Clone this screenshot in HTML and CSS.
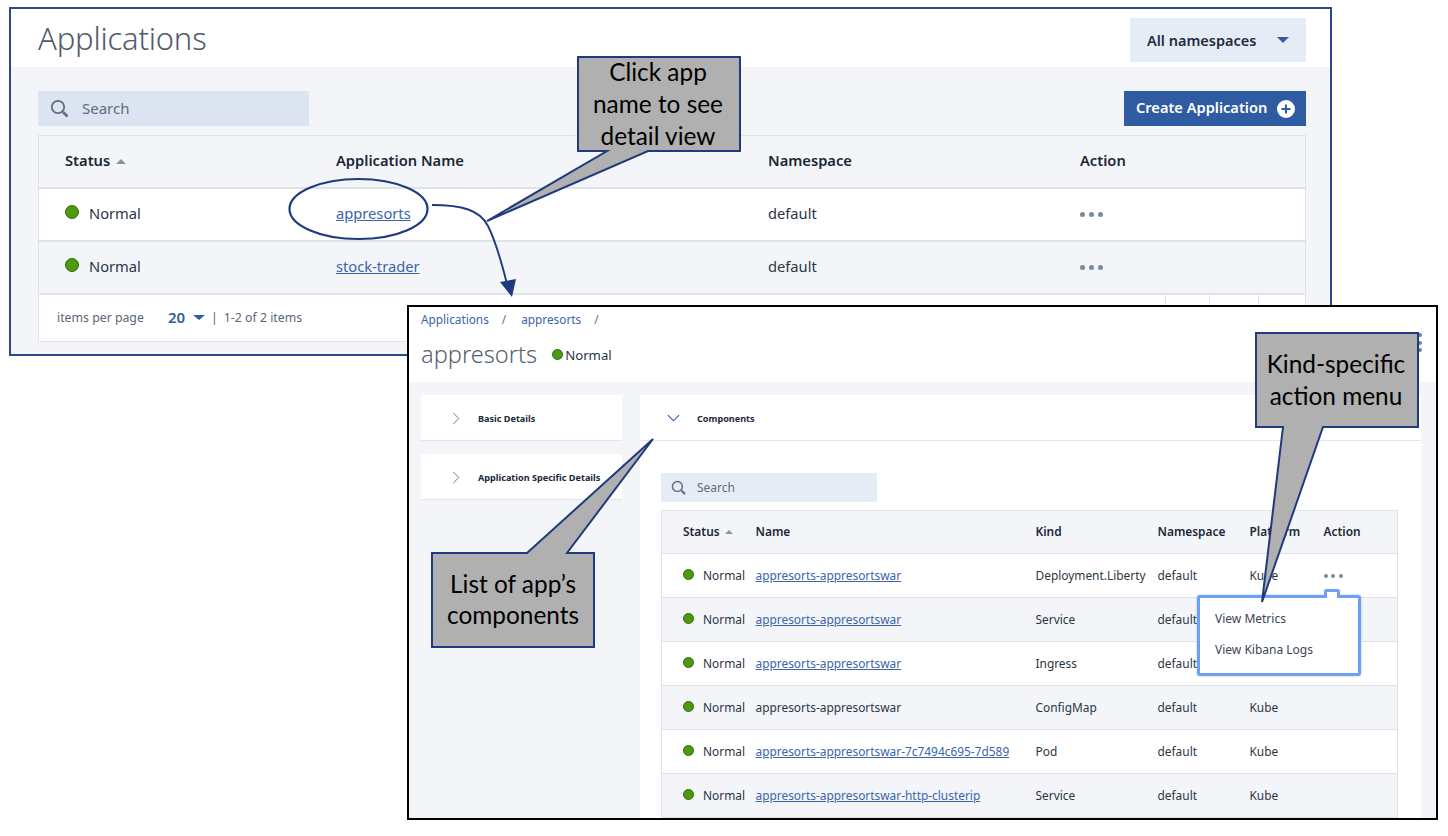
FILE: index.html
```html
<!DOCTYPE html>
<html lang="en">
<head>
<meta charset="utf-8">
<title>Applications</title>
<link rel="stylesheet" href="styles.css">
</head>
<body>
<div class="canvas">

  <section class="win win-apps">
    <header class="apps-head">
      <h1 class="apps-title">Applications</h1>
      <div class="ns-select"><span>All namespaces</span><i class="caret-down"></i></div>
    </header>
    <div class="apps-body">
      <div class="toolbar">
        <div class="search search-lg">
          <svg class="search-icon" viewBox="0 0 20 20" width="20" height="20"><circle cx="8" cy="8" r="6.2" fill="none" stroke="#5f6d80" stroke-width="1.8"/><path d="M13 13l4.5 4.5" stroke="#5f6d80" stroke-width="2.6"/></svg>
          <span>Search</span>
        </div>
        <button class="create-btn"><span>Create Application</span>
          <svg viewBox="0 0 18 18" width="18" height="18"><circle cx="9" cy="9" r="9" fill="#fff"/><path d="M9 4.5v9M4.5 9h9" stroke="#2f5ba3" stroke-width="2"/></svg>
        </button>
      </div>
      <div class="tbl-box">
        <table class="tbl tbl-apps">
          <colgroup><col class="a1"><col class="a2"><col class="a3"><col class="a4"><col class="a5"></colgroup>
          <thead><tr><th>Status <i class="caret-up"></i></th><th>Application Name</th><th>Namespace</th><th>Action</th><th></th></tr></thead>
          <tbody>
            <tr><td><i class="dot"></i>Normal</td><td><a href="#">appresorts</a></td><td>default</td><td><span class="more"><i></i><i></i><i></i></span></td><td></td></tr>
            <tr class="alt"><td><i class="dot"></i>Normal</td><td><a href="#">stock-trader</a></td><td>default</td><td><span class="more"><i></i><i></i><i></i></span></td><td></td></tr>
          </tbody>
        </table>
        <footer class="pager">
          <span class="pager-label">items per page</span>
          <span class="pager-size">20</span><i class="caret-down small"></i>
          <span class="pager-sep">|</span>
          <span class="pager-count">1-2 of 2 items</span>
          <span class="pager-btns"><b></b><b></b><b></b></span>
        </footer>
      </div>
    </div>
  </section>

  <section class="win win-detail">
    <header class="detail-head">
      <nav class="crumbs"><a href="#">Applications</a><span>/</span><a href="#">appresorts</a><span>/</span></nav>
      <div class="detail-title"><h2>appresorts</h2><i class="dot dot-sm"></i><span>Normal</span></div>
      <div class="kebab"><i></i><i></i><i></i></div>
    </header>
    <div class="detail-body">
      <aside class="side">
        <div class="acc"><svg viewBox="0 0 10 16" width="8" height="13"><path d="M1.5 1l7 7-7 7" fill="none" stroke="#6b7785" stroke-width="1.2"/></svg><span>Basic Details</span></div>
        <div class="acc"><svg viewBox="0 0 10 16" width="8" height="13"><path d="M1.5 1l7 7-7 7" fill="none" stroke="#6b7785" stroke-width="1.2"/></svg><span>Application Specific Details</span></div>
      </aside>
      <div class="panel">
        <div class="acc acc-open"><svg viewBox="0 0 16 10" width="13" height="8"><path d="M1 1.5l7 7 7-7" fill="none" stroke="#2f5ba3" stroke-width="1.4"/></svg><span>Components</span></div>
        <div class="search search-sm">
          <svg class="search-icon" viewBox="0 0 20 20" width="16" height="16"><circle cx="8" cy="8" r="6.2" fill="none" stroke="#5f6d80" stroke-width="1.8"/><path d="M13 13l4.5 4.5" stroke="#5f6d80" stroke-width="2.6"/></svg>
          <span>Search</span>
        </div>
        <table class="tbl tbl-comp">
          <colgroup><col class="c1"><col class="c2"><col class="c3"><col class="c4"><col class="c5"><col class="c6"></colgroup>
          <thead><tr><th>Status <i class="caret-up small"></i></th><th>Name</th><th>Kind</th><th>Namespace</th><th>Platform</th><th>Action</th></tr></thead>
          <tbody>
            <tr><td><i class="dot dot-xs"></i>Normal</td><td><a href="#">appresorts-appresortswar</a></td><td>Deployment.Liberty</td><td>default</td><td>Kube</td><td><span class="more more-sm"><i></i><i></i><i></i></span></td></tr>
            <tr class="alt"><td><i class="dot dot-xs"></i>Normal</td><td><a href="#">appresorts-appresortswar</a></td><td>Service</td><td>default</td><td>Kube</td><td></td></tr>
            <tr><td><i class="dot dot-xs"></i>Normal</td><td><a href="#">appresorts-appresortswar</a></td><td>Ingress</td><td>default</td><td>Kube</td><td></td></tr>
            <tr class="alt"><td><i class="dot dot-xs"></i>Normal</td><td>appresorts-appresortswar</td><td>ConfigMap</td><td>default</td><td>Kube</td><td></td></tr>
            <tr><td><i class="dot dot-xs"></i>Normal</td><td><a href="#">appresorts-appresortswar-7c7494c695-7d589</a></td><td>Pod</td><td>default</td><td>Kube</td><td></td></tr>
            <tr class="alt"><td><i class="dot dot-xs"></i>Normal</td><td><a href="#">appresorts-appresortswar-http-clusterip</a></td><td>Service</td><td>default</td><td>Kube</td><td></td></tr>
          </tbody>
        </table>
      </div>
    </div>
  </section>

  <div class="menu">
    <i class="menu-notch"></i>
    <div>View Metrics</div>
    <div>View Kibana Logs</div>
  </div>

  <svg class="marks" viewBox="0 0 1448 836" width="1448" height="836">
    <ellipse cx="358.5" cy="209" rx="69" ry="30" fill="none" stroke="#1f3a7d" stroke-width="2.2"/>
    <path d="M432 205C462 205 480 210 488 226C496 242 502 264 507 284" fill="none" stroke="#1f3a7d" stroke-width="1.9"/>
    <path d="M512 297L500 282L516 279Z" fill="#1f3a7d"/>
    <path class="bubble" d="M578 57H740V151H648L487 221L607 151H578Z"/>
    <path class="bubble" d="M432 553H527L653 439L567 553H594V647H432Z"/>
    <path class="bubble" d="M1256 333H1418V427H1323L1262 602L1283 427H1256Z"/>
  </svg>

  <div class="note note-1">Click app<br>name to see<br>detail view</div>
  <div class="note note-2">List of app’s<br>components</div>
  <div class="note note-3">Kind-specific<br>action menu</div>
</div>
</body>
</html>
```

FILE: styles.css
```css
* { box-sizing: border-box; }
html, body { margin: 0; padding: 0; background: #fff; }
body { font-family: "Noto Sans", "Open Sans", sans-serif; color: #2a3544; }
.canvas { position: relative; width: 1448px; height: 836px; overflow: hidden; }

.win { position: absolute; background: #f3f5f9; overflow: hidden; }
.win-apps { left: 9px; top: 7px; width: 1323px; height: 349px; border: 2px solid #2c4a8a; }
.win-detail { left: 407px; top: 305px; width: 1031px; height: 515px; border: 2px solid #000; z-index: 2; }

/* Applications window */
.apps-head { height: 58px; background: #fff; display: flex; justify-content: space-between; padding: 7px 24px 0 27px; }
.apps-title { margin: 0; font-size: 31px; font-weight: 300; line-height: 44px; color: #4f5b6b; letter-spacing: -0.2px; }
.ns-select { width: 176px; height: 44px; margin-top: 2px; background: #e6ecf5; display: flex; align-items: center; justify-content: space-between; padding: 0 17px 0 17px; font-size: 14.5px; font-weight: 600; color: #1f2d40; }
.apps-body { padding: 24px 24px 0 27px; }
.toolbar { display: flex; justify-content: space-between; height: 35px; }
.search { display: flex; align-items: center; color: #5f6d80; }
.search span { padding-bottom: 1px; }
.search-lg { width: 271px; background: #dbe4f0; padding-left: 12px; font-size: 15px; gap: 12px; }
.create-btn { width: 182px; background: #2f5ba3; border: 0; color: #fff; font: 600 14.6px "Noto Sans", sans-serif; display: flex; align-items: center; justify-content: space-between; padding: 0 11px 0 12px; }
.create-btn span { padding-bottom: 3px; }
.tbl-box { margin-top: 9px; border: 1px solid #dfe3e9; background: #fff; height: 207px; }

.tbl { border-collapse: collapse; table-layout: fixed; width: 100%; }
.tbl th { text-align: left; font-weight: 600; color: #1c2737; background: #f3f5f9; padding: 0; }
.tbl td { padding: 0; background: #fff; white-space: nowrap; border-top: 1px solid #dfe3e9; }
.tbl tr.alt td { background: #f3f5f9; }
.tbl a { color: #3b64ab; text-decoration: underline; }

.tbl-apps { font-size: 14.7px; }
.tbl-apps th { height: 52px; padding-bottom: 3px; }
.tbl-apps td { height: 52.5px; border-top-width: 2px; padding-bottom: 2px; }
.tbl-apps th:first-child, .tbl-apps td:first-child { padding-left: 26px; }
.a1 { width: 297px; } .a2 { width: 432px; } .a3 { width: 312px; } .a4 { width: 100px; } .a5 { width: 125px; }

.pager { height: 48px; border-top: 2px solid #dfe3e9; display: flex; align-items: center; padding: 0 0 2px 18px; font-size: 12.3px; color: #5a6675; }
.pager-size { margin-left: 24px; font-size: 15px; font-weight: 600; color: #2f5ba3; margin-right: 8px; }
.pager-sep { margin: 0 6px 0 6px; }
.pager-btns { margin-left: auto; display: flex; height: 100%; }
.pager-btns b { display: block; border-left: 1px solid #dfe3e9; }
.pager-btns b:nth-child(1) { width: 44px; }
.pager-btns b:nth-child(2) { width: 49px; }
.pager-btns b:nth-child(3) { width: 47px; }

.caret-down { display: inline-block; width: 0; height: 0; border-left: 6px solid transparent; border-right: 6px solid transparent; border-top: 6px solid #2f5ba3; }
.caret-down.small { border-top-width: 5px; }
.caret-up { display: inline-block; width: 0; height: 0; margin-left: 2px; vertical-align: 2px; border-left: 5px solid transparent; border-right: 5px solid transparent; border-bottom: 5px solid #8793a3; }
.caret-up.small { border-left-width: 4px; border-right-width: 4px; border-bottom-width: 4px; }

.dot { display: inline-block; width: 14px; height: 14px; border-radius: 50%; background: #4f9a0c; border: 1px solid #2f6a10; margin-right: 10px; vertical-align: 0; }
.dot-sm { width: 11px; height: 11px; margin: 0 2px 0 0; }
.dot-xs { width: 11px; height: 11px; margin-right: 9px; vertical-align: 0; }
.more { display: inline-flex; gap: 4px; vertical-align: middle; margin-top: -2px; }
.more i { display: block; width: 5px; height: 5px; border-radius: 50%; background: #7a8a9c; }
.more-sm { gap: 3.5px; margin-top: -1px; }
.more-sm i { width: 4px; height: 4px; }

/* Detail window */
.detail-head { position: relative; height: 75px; background: #fff; padding: 4px 0 0 12px; }
.crumbs { display: flex; font-size: 11.8px; line-height: 17px; color: #5f6d80; }
.crumbs a { color: #3b64ab; text-decoration: none; }
.crumbs span { margin: 0 15px 0 13px; }
.detail-title { display: flex; align-items: center; margin-top: 8px; font-size: 13.2px; color: #2a3544; }
.detail-title span { padding-top: 1px; }
.detail-title h2 { margin: 0 15px 0 0; font-size: 23.6px; font-weight: 300; line-height: 36px; color: #56616f; }
.kebab { position: absolute; left: 1009px; top: 26px; display: flex; flex-direction: column; gap: 3.5px; }
.kebab i { display: block; width: 4px; height: 4px; border-radius: 50%; background: #6d7f99; }

.detail-body { display: flex; align-items: flex-start; gap: 18px; padding: 13px 0 0 12px; height: 440px; overflow: hidden; }
.side { width: 201px; display: flex; flex-direction: column; gap: 13px; }
.acc { display: flex; align-items: center; height: 46px; background: #fff; border-bottom: 1px solid #e3e7ed; padding: 1px 0 0 31px; font-size: 9.1px; font-weight: 700; color: #1c2737; gap: 18px; }
.panel { width: 781px; height: 500px; background: #fff; }
.acc-open { padding-left: 27px; gap: 17px; }
.search-sm { width: 216px; height: 29px; margin: 32px 0 0 21px; background: #e6ecf5; padding-left: 10px; font-size: 12px; gap: 10px; }
.tbl-comp { width: 736px; margin: 8px 0 0 21px; font-size: 11.9px; border: 1px solid #dfe3e9; }
.tbl-comp th { height: 43px; padding-bottom: 2px; }
.tbl-comp td { height: 44px; padding-bottom: 2px; }
.tbl-comp th:first-child, .tbl-comp td:first-child { padding-left: 21px; }
.c1 { width: 94px; } .c2 { width: 280px; } .c3 { width: 122px; } .c4 { width: 92px; } .c5 { width: 74px; } .c6 { width: 74px; }

/* Action menu */
.menu { position: absolute; z-index: 3; left: 1197px; top: 595px; width: 164px; height: 81px; background: #fff; border: 3px solid #6e9ff2; border-radius: 3px; box-shadow: 0 0 2px #8fb5f5; padding: 12px 0 0 15px; font-size: 12px; line-height: 17px; color: #3a4656; display: flex; flex-direction: column; gap: 14px; }
.menu-notch { position: absolute; left: 124px; top: -9px; width: 16px; height: 9px; background: #fff; border: 3px solid #6e9ff2; border-bottom: 0; border-radius: 3px 3px 0 0; }

/* Annotations */
.marks { position: absolute; left: 0; top: 0; z-index: 4; }
.bubble { fill: #b0b0b0; stroke: #1f3a7d; stroke-width: 2; }
.note { position: absolute; z-index: 5; width: 162px; text-align: center; font-family: "Lato", sans-serif; font-size: 24.4px; line-height: 32px; color: #000; }
.note-1 { left: 577px; top: 56px; }
.note-2 { left: 432px; top: 568px; line-height: 31px; }
.note-3 { left: 1255px; top: 348px; }
```
